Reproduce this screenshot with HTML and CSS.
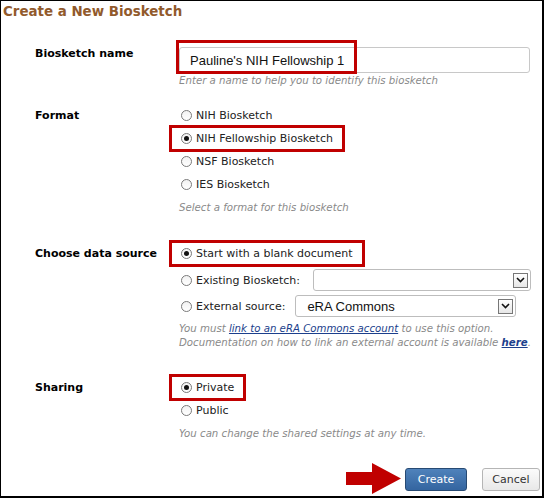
FILE: index.html
```html
<!DOCTYPE html>
<html lang="en">
<head>
    <meta charset="UTF-8">
    <title>Create a New Biosketch</title>
    <link rel="stylesheet" href="styles.css">
</head>
<body>
    <div class="dialog">
        <h2 class="dialog-title">Create a New Biosketch</h2>

        <div class="form">
            <!-- Name -->
            <div class="row row-name">
                <div class="row-label">Biosketch name</div>
                <div class="row-field">
                    <div class="input-wrap">
                        <input class="text-input" type="text" value="Pauline's NIH Fellowship 1">
                        <span class="mark-box"></span>
                    </div>
                    <div class="hint hint-name">Enter a name to help you to identify this biosketch</div>
                </div>
            </div>

            <!-- Format -->
            <div class="row row-format">
                <div class="row-label">Format</div>
                <div class="row-field">
                    <div class="opt"><span class="radio"></span>NIH Biosketch</div>
                    <div class="opt"><span class="marked"><span class="radio checked"></span>NIH Fellowship Biosketch</span></div>
                    <div class="opt"><span class="radio"></span>NSF Biosketch</div>
                    <div class="opt"><span class="radio"></span>IES Biosketch</div>
                    <div class="hint hint-format">Select a format for this biosketch</div>
                </div>
            </div>

            <!-- Data source -->
            <div class="row row-source">
                <div class="row-label">Choose data source</div>
                <div class="row-field">
                    <div class="opt"><span class="marked"><span class="radio checked"></span>Start with a blank document</span></div>
                    <div class="opt opt-select">
                        <span class="radio"></span>Existing Biosketch:
                        <div class="select select-existing">
                            <span class="select-text"></span>
                            <span class="select-arrow"><svg width="9" height="6" viewBox="0 0 9 6"><path d="M1 1 L4.5 4.5 L8 1" fill="none" stroke="#111" stroke-width="1.6"/></svg></span>
                        </div>
                    </div>
                    <div class="opt opt-select opt-external">
                        <span class="radio"></span>External source:
                        <div class="select select-external">
                            <span class="select-text">eRA Commons</span>
                            <span class="select-arrow"><svg width="9" height="6" viewBox="0 0 9 6"><path d="M1 1 L4.5 4.5 L8 1" fill="none" stroke="#111" stroke-width="1.6"/></svg></span>
                        </div>
                    </div>
                    <div class="hint hint-source">
                        You must <a href="#">link to an eRA Commons account</a> to use this option.<br>
                        Documentation on how to link an external account is available <a href="#" class="strong-link">here</a>.
                    </div>
                </div>
            </div>

            <!-- Sharing -->
            <div class="row row-sharing">
                <div class="row-label">Sharing</div>
                <div class="row-field">
                    <div class="opt"><span class="marked"><span class="radio checked"></span>Private</span></div>
                    <div class="opt"><span class="radio"></span>Public</div>
                    <div class="hint hint-sharing">You can change the shared settings at any time.</div>
                </div>
            </div>
        </div>

        <div class="dialog-footer">
            <svg class="pointer-arrow" width="56" height="32" viewBox="0 0 56 32">
                <path d="M0 9 H26 V0 L55 15.5 L26 31 V22 H0 Z" fill="#c00000"/>
            </svg>
            <button class="btn btn-primary">Create</button>
            <button class="btn btn-default">Cancel</button>
        </div>
    </div>
</body>
</html>
```

FILE: styles.css
```css
* {
    box-sizing: border-box;
}

body {
    margin: 0;
    background: #ffffff;
    font-family: "DejaVu Sans", Verdana, sans-serif;
    font-size: 11px;
    color: #222;
}

/* Dialog frame */
.dialog {
    width: 544px;
    height: 498px;
    border-style: solid;
    border-color: #000;
    border-width: 1px 2px 2px 1px;
    background: #fff;
    display: flex;
    flex-direction: column;
}

.dialog-title {
    margin: 0;
    height: 23px;
    padding: 1px 0 0 2px;
    font-size: 13.4px;
    line-height: 20px;
    font-weight: bold;
    color: #915a2c;
}

.form {
    padding: 0 12px 0 34px;
}

/* Rows */
.row {
    display: grid;
    grid-template-columns: 144px 1fr;
    align-items: start;
}

.row-label {
    font-weight: bold;
    color: #000;
    line-height: 23px;
}

.row-name {
    margin-top: 23px;
}

.row-name .row-label {
    margin-top: -5px;
}

.row-format {
    margin-top: 16px;
}

.row-source {
    margin-top: 27px;
}

.row-sharing {
    margin-top: 26px;
}

/* Text input */
.input-wrap {
    position: relative;
}

.text-input {
    display: block;
    width: 351px;
    height: 26px;
    margin: 0;
    padding: 0 10px;
    border: 1px solid #c8c8c8;
    border-radius: 3px;
    font-family: "Liberation Sans", Arial, sans-serif;
    font-size: 13px;
    color: #111;
    background: #fff;
}

.mark-box {
    position: absolute;
    left: -3px;
    top: -7px;
    width: 181px;
    height: 34px;
    border: 3px solid #c00000;
}

/* Hints */
.hint {
    font-style: italic;
    font-size: 10.2px;
    color: #8a8a8a;
    line-height: 14px;
    white-space: nowrap;
}

.hint-name {
    margin-top: 1px;
}

.hint-format {
    margin-top: 5px;
}

.hint-source {
    margin-top: 5px;
}

.hint-sharing {
    margin-top: 5px;
}

.hint a {
    color: #1c3f8c;
    text-decoration: underline;
}

.hint a.strong-link {
    font-weight: bold;
}

/* Radio options */
.opt {
    display: flex;
    align-items: center;
    height: 23px;
    padding-left: 2px;
    white-space: nowrap;
}

.marked {
    display: inline-flex;
    align-items: center;
    height: 17px;
    padding: 0 7px;
    margin: 0 -7px;
    outline: 3px solid #c00000;
    outline-offset: 2px;
}

.radio {
    display: inline-block;
    position: relative;
    width: 11px;
    height: 11px;
    margin-right: 4px;
    border: 1px solid #7a7a7a;
    border-radius: 50%;
    background: linear-gradient(#f2f2f2, #ffffff);
    flex-shrink: 0;
}

.radio.checked::after {
    content: "";
    position: absolute;
    left: 2px;
    top: 2px;
    width: 5px;
    height: 5px;
    border-radius: 50%;
    background: #111;
}

/* Select boxes */
.opt-select {
    height: 22px;
    margin-top: 4px;
}

.select {
    display: flex;
    align-items: center;
    height: 22px;
    border: 1px solid #bdbdbd;
    border-radius: 3px;
    background: #fff;
}

.select-existing {
    flex: 1;
    margin-left: 13px;
}

.select-external {
    width: 221px;
    margin-left: 10px;
}

.select-text {
    flex: 1;
    padding-left: 11px;
    font-family: "Liberation Sans", Arial, sans-serif;
    font-size: 13px;
    color: #111;
}

.select-arrow {
    display: flex;
    align-items: center;
    justify-content: center;
    width: 15px;
    height: 15px;
    margin-right: 2px;
    border: 1px solid #777;
    background: linear-gradient(#ffffff, #e6e6e6);
}

/* Footer */
.dialog-footer {
    display: flex;
    align-items: center;
    justify-content: flex-end;
    margin-top: 22px;
    padding-right: 2px;
}

.pointer-arrow {
    margin-right: 3px;
}

.btn {
    height: 23px;
    padding: 0;
    border-radius: 3px;
    font-family: "DejaVu Sans", Verdana, sans-serif;
    font-size: 11px;
    cursor: pointer;
}

.btn-primary {
    width: 62px;
    color: #fff;
    border: 1px solid #274a73;
    background: linear-gradient(#4f82bb, #3465a0);
}

.btn-default {
    width: 58px;
    margin-left: 15px;
    color: #333;
    border: 1px solid #b5b5b5;
    background: linear-gradient(#fbfbfb, #e8e8e8);
}
```
